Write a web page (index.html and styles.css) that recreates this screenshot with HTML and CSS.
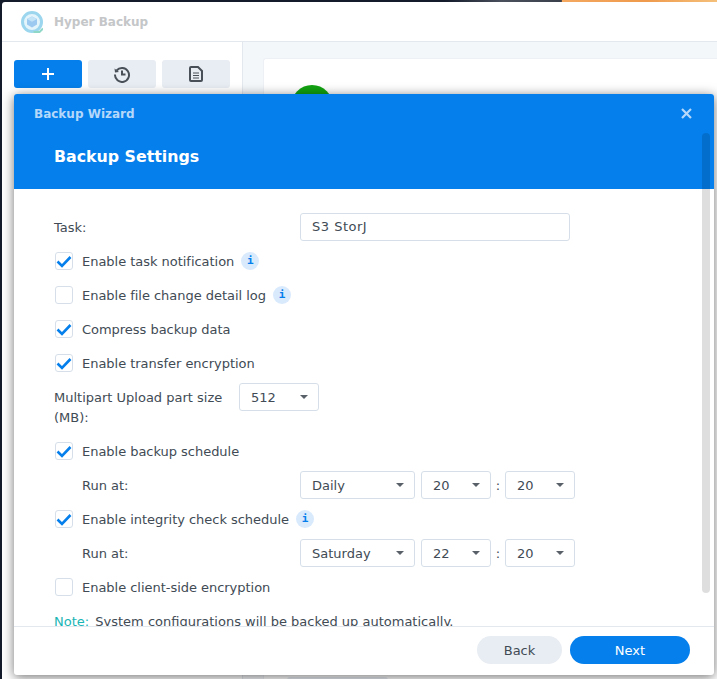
FILE: index.html
```html
<!DOCTYPE html>
<html lang="en">
<head>
<meta charset="utf-8">
<title>Hyper Backup</title>
<link rel="stylesheet" href="styles.css">
</head>
<body>
<div class="wallpaper"></div>
<div class="window">
  <header class="app-header">
    <svg class="app-logo" width="22" height="22" viewBox="0 0 22 22">
      <circle cx="11" cy="11" r="9.500" fill="#e4f4fb" stroke="#9bd6ee" stroke-width="3"/>
      <path d="M11 5.500l5 2.500v5.500L11 16.500l-5-3V8z" fill="#9cc9f0"/>
      <path d="M11 5.500l5 2.500-5 2.700L6 8z" fill="#c3e3f7"/>
      <path d="M22 17.500l-3.500 3.500h-6" fill="none" stroke="#8fd8c8" stroke-width="2"/>
    </svg>
    <span class="app-title">Hyper Backup</span>
  </header>
  <div class="app-body">
    <aside class="sidebar">
      <div class="toolbar">
        <button class="tool tool-primary">
          <svg width="14" height="14" viewBox="0 0 14 14"><path d="M7 1v12M1 7h12" stroke="#fff" stroke-width="2"/></svg>
        </button>
        <button class="tool">
          <svg width="18" height="18" viewBox="0 0 18 18" fill="none" stroke="#4a5058" stroke-width="2"><path d="M3.600 5.500A7 7 0 1 1 2 9.500"/><path d="M1.500 3.500l.5 4 4-.5" fill="#4a5058" stroke="none"/><path d="M9 5.500v4h3.500"/></svg>
        </button>
        <button class="tool">
          <svg width="14" height="16" viewBox="0 0 14 16"><path d="M2 1h7l4 4v9a1 1 0 0 1-1 1H2a1 1 0 0 1-1-1V2a1 1 0 0 1 1-1z" fill="none" stroke="#4a5058" stroke-width="2"/><path d="M4 7h6M4 9.500h6M4 12h6" stroke="#4a5058"/></svg>
        </button>
      </div>
    </aside>
    <main class="content">
      <div class="card"><div class="status-dot"></div><div class="card-bar"></div></div>
    </main>
  </div>
</div>

<section class="dialog">
  <div class="dialog-head">
    <div class="dialog-bar">
      <span class="dialog-name">Backup Wizard</span>
      <svg class="dialog-close" width="11" height="11" viewBox="0 0 11 11"><path d="M1 1l9 9M10 1l-9 9" stroke="#b5d8fa" stroke-width="2.200"/></svg>
    </div>
    <h1 class="dialog-title">Backup Settings</h1>
  </div>
  <div class="dialog-body">
    <div class="row row-field">
      <label class="field-label">Task:</label>
      <div class="input">S3 StorJ</div>
    </div>
    <div class="row row-check">
      <span class="check on"><svg width="16" height="13" viewBox="0 0 16 13"><path d="M1.500 6.500l4.500 4.500 8.500-9" fill="none" stroke="#057feb" stroke-width="2.600"/></svg></span>
      <span class="check-text">Enable task notification</span>
      <span class="info">i</span>
    </div>
    <div class="row row-check">
      <span class="check"></span>
      <span class="check-text">Enable file change detail log</span>
      <span class="info">i</span>
    </div>
    <div class="row row-check">
      <span class="check on"><svg width="16" height="13" viewBox="0 0 16 13"><path d="M1.500 6.500l4.500 4.500 8.500-9" fill="none" stroke="#057feb" stroke-width="2.600"/></svg></span>
      <span class="check-text">Compress backup data</span>
    </div>
    <div class="row row-check">
      <span class="check on"><svg width="16" height="13" viewBox="0 0 16 13"><path d="M1.500 6.500l4.500 4.500 8.500-9" fill="none" stroke="#057feb" stroke-width="2.600"/></svg></span>
      <span class="check-text">Enable transfer encryption</span>
    </div>
    <div class="row row-part">
      <label class="part-label">Multipart Upload part size (MB):</label>
      <div class="select w-part"><span>512</span><i class="caret"></i></div>
    </div>
    <div class="row row-check">
      <span class="check on"><svg width="16" height="13" viewBox="0 0 16 13"><path d="M1.500 6.500l4.500 4.500 8.500-9" fill="none" stroke="#057feb" stroke-width="2.600"/></svg></span>
      <span class="check-text">Enable backup schedule</span>
    </div>
    <div class="row row-sched">
      <label class="sched-label">Run at:</label>
      <div class="select w-day"><span>Daily</span><i class="caret"></i></div>
      <div class="select w-num"><span>20</span><i class="caret"></i></div>
      <span class="colon">:</span>
      <div class="select w-num"><span>20</span><i class="caret"></i></div>
    </div>
    <div class="row row-check">
      <span class="check on"><svg width="16" height="13" viewBox="0 0 16 13"><path d="M1.500 6.500l4.500 4.500 8.500-9" fill="none" stroke="#057feb" stroke-width="2.600"/></svg></span>
      <span class="check-text">Enable integrity check schedule</span>
      <span class="info">i</span>
    </div>
    <div class="row row-sched">
      <label class="sched-label">Run at:</label>
      <div class="select w-day"><span>Saturday</span><i class="caret"></i></div>
      <div class="select w-num"><span>22</span><i class="caret"></i></div>
      <span class="colon">:</span>
      <div class="select w-num"><span>20</span><i class="caret"></i></div>
    </div>
    <div class="row row-check">
      <span class="check"></span>
      <span class="check-text">Enable client-side encryption</span>
    </div>
    <p class="note"><span class="note-key">Note:</span> System configurations will be backed up automatically.</p>
  </div>
  <footer class="dialog-foot">
    <button class="btn btn-back">Back</button>
    <button class="btn btn-next">Next</button>
  </footer>
  <div class="scrollbar"></div>
</section>
</body>
</html>
```
FILE: styles.css
```css
* { box-sizing: border-box; }
html, body { margin: 0; height: 100%; }
body {
  width: 717px;
  height: 679px;
  overflow: hidden;
  position: relative;
  background: #141b2b;
  font-family: "DejaVu Sans", sans-serif;
  font-size: 13px;
  color: #414b55;
  padding: 2px 0 0 2px;
}
.wallpaper {
  position: absolute;
  top: 0;
  left: 0;
  right: 0;
  height: 2px;
  background: linear-gradient(90deg, #141b2b 62%, #4a505c 70%, #3a404c 78.300%, #f4a860 78.400%, #ef9a4c 90%, #f5c07a);
}
.window {
  height: 700px;
  background: #fff;
  border-radius: 3px 0 0 0;
  display: flex;
  flex-direction: column;
}
.app-header {
  height: 40px;
  flex: none;
  display: flex;
  align-items: center;
  gap: 11px;
  padding-left: 19px;
  border-bottom: 1px solid #e3e8ef;
}
.app-title { font-weight: 700; font-size: 12px; color: #c4c6c8; }
.app-body { flex: 1; display: flex; }
.sidebar { width: 241px; flex: none; padding: 18px 12px; border-right: 1px solid #e3e8ef; }
.toolbar { display: flex; gap: 6px; }
.tool {
  width: 68px;
  height: 28px;
  border: 0;
  padding: 0;
  border-radius: 3px;
  background: #e8edf3;
  display: flex;
  align-items: center;
  justify-content: center;
}
.tool-primary { background: #057feb; }
.content { flex: 1; background: #f4f7fa; padding: 16px 0 0 20px; }
.card { height: 640px; background: #fff; border: 1px solid #edf0f5; border-right: 0; border-radius: 3px 0 0 0; padding: 26px 0 0 27px; }
.status-dot { width: 42px; height: 42px; border-radius: 50%; background: #12a312; }
.card-bar { width: 101px; height: 10px; margin: 550px 0 0 -4px; border-radius: 3px; background: #e8edf3; }

.dialog {
  position: absolute;
  left: 14px;
  top: 94px;
  width: 700px;
  height: 581px;
  background: #fff;
  border-radius: 3px;
  box-shadow: 0 2px 12px rgba(0, 0, 0, .55);
  display: flex;
  flex-direction: column;
  overflow: hidden;
}
.dialog-head { height: 95px; flex: none; background: #057feb; padding: 0 22px 0 20px; }
.dialog-bar { height: 39px; display: flex; align-items: center; justify-content: space-between; }
.dialog-name { font-weight: 700; font-size: 12px; color: #b5d8fa; }
.dialog-title { margin: 12px 0 0 20px; font-size: 15.800px; line-height: 24px; font-weight: 700; color: #fff; }
.dialog-body {
  flex: 1;
  min-height: 0;
  overflow: hidden;
  padding: 24px 40px 0;
}
.scrollbar {
  position: absolute;
  right: 4px;
  top: 39px;
  width: 8px;
  height: 460px;
  border-radius: 4px;
  background: rgba(0, 0, 0, .13);
}
.row { display: flex; align-items: center; }
.row-field { height: 28px; margin-bottom: 6px; }
.field-label { width: 246px; }
.input {
  width: 270px;
  height: 28px;
  border: 1px solid #d6dfe9;
  border-radius: 3px;
  padding-left: 11px;
  line-height: 26px;
  letter-spacing: .5px;
}
.row-check { height: 28px; margin-bottom: 6px; }
.check {
  width: 18px;
  height: 18px;
  margin-left: 1px;
  margin-right: 9px;
  border: 1px solid #d6dfe9;
  border-radius: 3px;
  display: flex;
  align-items: center;
  justify-content: center;
  flex: none;
}
.check-text { letter-spacing: -.03px; }
.info {
  width: 18px;
  height: 18px;
  margin-left: 7px;
  border-radius: 50%;
  background: #d9eafd;
  color: #057feb;
  font-family: "DejaVu Sans Mono", monospace;
  font-size: 11px;
  font-weight: 700;
  text-align: center;
  line-height: 18px;
}
.row-part { align-items: flex-start; height: 48px; margin-bottom: 6px; }
.part-label { width: 185px; line-height: 20px; margin-top: 5px; }
.select {
  height: 28px;
  border: 1px solid #d6dfe9;
  border-radius: 3px;
  padding: 0 10px 0 11px;
  display: flex;
  align-items: center;
  justify-content: space-between;
  flex: none;
}
.caret { width: 0; height: 0; border: 4.500px solid transparent; border-top: 4.500px solid #5a6068; border-bottom: 0; }
.w-part { width: 80px; }
.w-day { width: 115px; margin-right: 6px; }
.w-num { width: 70px; }
.row-sched { height: 28px; margin-bottom: 6px; }
.sched-label { width: 246px; padding-left: 28px; }
.colon { width: 14px; text-align: center; }
.note { margin: 12px 0 0; line-height: 18px; }
.note-key { color: #1ab5b5; margin-right: 2px; }
.dialog-foot {
  height: 49px;
  flex: none;
  border-top: 1px solid #e3e8ef;
  display: flex;
  justify-content: flex-end;
  align-items: flex-start;
  gap: 8px;
  padding: 9px 24px 0 0;
}
.btn {
  height: 28px;
  border: 0;
  border-radius: 14px;
  font: 13px "DejaVu Sans", sans-serif;
}
.btn-back { width: 85px; background: #e8edf3; color: #414b55; }
.btn-next { width: 120px; background: #057feb; color: #fff; }
```
